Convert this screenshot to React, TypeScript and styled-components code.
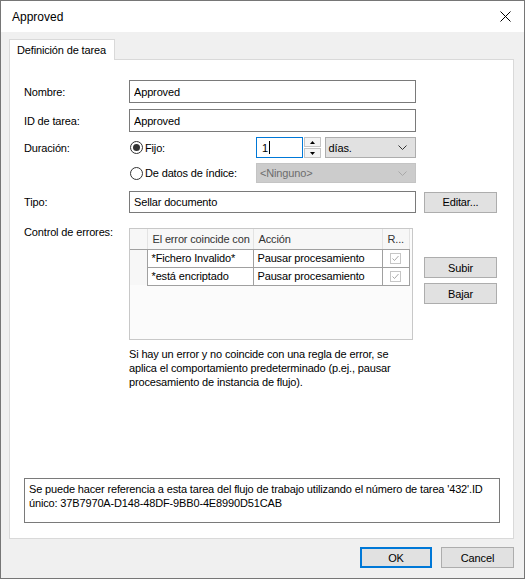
import React from 'react';
import styled, { createGlobalStyle } from 'styled-components';

const GlobalStyle = createGlobalStyle`
  html, body {
    margin: 0;
    padding: 0;
    background: #ffffff;
  }
  body {
    font-family: "Liberation Sans", Arial, sans-serif;
    font-size: 11px;
    letter-spacing: -0.15px;
    color: #000;
  }
  * {
    box-sizing: border-box;
  }
`

const Window = styled.div`
  width: 525px;
  height: 579px;
  border: 1px solid #767676;
  background: #f0f0f0;
  display: flex;
  flex-direction: column;
`

const TitleBar = styled.div`
  height: 31px;
  background: #ffffff;
  display: flex;
  align-items: center;
  justify-content: space-between;
  padding: 0 13px 0 11px;
  font-size: 12px;
  letter-spacing: 0;
`

const Body = styled.div`
  flex: 1;
  display: flex;
  flex-direction: column;
  padding: 7px 10px 10px 8px;
`

const TabStrip = styled.div`
  display: flex;
  height: 20px;
  position: relative;
  z-index: 1;
`

const Tab = styled.div`
  height: 21px;
  padding: 0 8px 0 7px;
  display: flex;
  align-items: center;
  background: #ffffff;
  border: 1px solid #d9d9d9;
  border-bottom: none;
`

const Panel = styled.div`
  flex: 1;
  display: flex;
  flex-direction: column;
  background: #ffffff;
  border: 1px solid #d9d9d9;
  padding: 20px 13px 15px 14px;
`

const FormRow = styled.div<{ $top?: number; $align?: string }>`
  display: flex;
  align-items: ${props => props.$align ?? 'center'};
  margin-top: ${props => props.$top ?? 0}px;
`

const Label = styled.div<{ $shift?: number }>`
  width: 105px;
  flex-shrink: 0;
  margin-top: ${props => props.$shift ?? 0}px;
`

const Field = styled.div`
  width: 287px;
  flex-shrink: 0;
  display: flex;
  align-items: center;
`

const TextBox = styled.input<{ $h?: number }>`
  width: 100%;
  height: ${props => props.$h ?? 23}px;
  border: 1px solid #7a7a7a;
  padding: 0 4px;
  font: inherit;
  letter-spacing: inherit;
  color: #000;
  background: #fff;
  outline: none;
`

const RadioLabel = styled.label`
  width: 127px;
  flex-shrink: 0;
  display: flex;
  align-items: center;
  gap: 2px;
  padding-left: 1px;
`

const RadioMark = styled.span<{ $on?: boolean }>`
  width: 13px;
  height: 13px;
  border-radius: 50%;
  border: 1px solid #333;
  background: #fff;
  display: flex;
  align-items: center;
  justify-content: center;
  &::after {
    content: '';
    width: 7px;
    height: 7px;
    border-radius: 50%;
    background: ${props => props.$on ? '#333' : 'transparent'};
  }
`

const SpinBox = styled.div`
  width: 47px;
  height: 21px;
  border: 1px solid #0078d7;
  display: flex;
  align-items: center;
  padding-left: 5px;
`

const Caret = styled.span`
  width: 1px;
  height: 13px;
  background: #000;
  margin-left: 1px;
`

const SpinButtons = styled.div`
  width: 17px;
  height: 21px;
  margin-left: 1px;
  display: flex;
  flex-direction: column;
  gap: 1px;
`

const SpinArrow = styled.div`
  flex: 1;
  border: 1px solid #c4c4c4;
  background: #f4f4f4;
  display: flex;
  align-items: center;
  justify-content: center;
`

const Combo = styled.div<{ $w: number; $disabled?: boolean }>`
  width: ${props => props.$w}px;
  height: ${props => props.$disabled ? 20 : 21}px;
  margin-left: ${props => props.$disabled ? 0 : 4}px;
  border: 1px solid ${props => props.$disabled ? '#c4c4c4' : '#adadad'};
  background: ${props => props.$disabled ? '#cccccc' : '#e1e1e1'};
  color: ${props => props.$disabled ? '#6d6d6d' : '#000'};
  display: flex;
  align-items: center;
  justify-content: space-between;
  padding: 0 8px 0 3px;
`

const Button = styled.div<{ $w?: number; $default?: boolean }>`
  width: ${props => props.$w ?? 73}px;
  height: 21px;
  flex-shrink: 0;
  border: ${props => props.$default ? '2px solid #0078d7' : '1px solid #adadad'};
  background: #e1e1e1;
  display: flex;
  align-items: center;
  justify-content: center;
`

const SideColumn = styled.div<{ $top?: number; $left?: number }>`
  margin-left: ${props => props.$left ?? 8}px;
  margin-top: ${props => props.$top ?? 0}px;
  display: flex;
  flex-direction: column;
  gap: 5px;
`

const Grid = styled.div`
  width: 284px;
  height: 112px;
  border: 1px solid #c8c8c8;
  background: #fbfbfb;
`

const GridTable = styled.table`
  border-collapse: collapse;
  table-layout: fixed;
`

const HeadCell = styled.th<{ $w: number }>`
  width: ${props => props.$w}px;
  height: 20px;
  padding: 0 0 0 5px;
  text-align: left;
  font-weight: normal;
  color: #333;
  background: #f7f7f7;
  border-right: 1px solid #e3e3e3;
  border-bottom: 1px solid #a0a0a0;
  white-space: nowrap;
  overflow: hidden;
`

const RowHead = styled.td`
  background: #f7f7f7;
  border-right: 1px solid #a0a0a0;
  padding: 0;
`

const Cell = styled.td<{ $center?: boolean }>`
  height: 18px;
  padding: ${props => props.$center ? '0' : '0 0 0 4px'};
  background: #fff;
  border-right: 1px solid #a0a0a0;
  border-bottom: 1px solid #a0a0a0;
  white-space: nowrap;
  text-align: ${props => props.$center ? 'center' : 'left'};
`

const Check = styled.span`
  display: inline-flex;
  width: 11px;
  height: 11px;
  border: 1px solid #c6c6c6;
  background: #fff;
  align-items: center;
  justify-content: center;
  vertical-align: middle;
`

const HelpText = styled.div`
  margin: 7px 0 0 105px;
  line-height: 14px;
`

const InfoBox = styled.div`
  margin-top: auto;
  height: 45px;
  border: 1px solid #7a7a7a;
  padding: 3px 4px;
  line-height: 14px;
  white-space: nowrap;
`

const Footer = styled.div`
  display: flex;
  justify-content: flex-end;
  gap: 9px;
  margin-top: 8px;
`

const Chevron: React.FC<{ color?: string }> = ({ color = '#333' }) => (
  <svg width="9" height="5" viewBox="0 0 9 5">
    <polyline points="0.5,0.5 4.5,4.5 8.5,0.5" fill="none" stroke={color} strokeWidth="1" />
  </svg>
)

const Arrow: React.FC<{ up?: boolean }> = ({ up }) => (
  <svg width="5" height="3" viewBox="0 0 5 3">
    <polygon points={up ? '0,3 5,3 2.5,0' : '0,0 5,0 2.5,3'} fill="#000" />
  </svg>
)

const CheckBox: React.FC = () => (
  <Check>
    <svg width="9" height="9" viewBox="0 0 9 9">
      <polyline points="1.5,4.5 3.5,6.5 7.5,2" fill="none" stroke="#a8a8a8" strokeWidth="1" />
    </svg>
  </Check>
)

const rules = [
  { match: '*Fichero Invalido*', action: 'Pausar procesamiento' },
  { match: '*está encriptado', action: 'Pausar procesamiento' },
]

const App: React.FC = () => {
  return (
    <>
      <GlobalStyle />
      <Window>
        <TitleBar>
          <span>Approved</span>
          <svg width="11" height="11" viewBox="0 0 11 11">
            <path d="M0.5 0.5 L10.5 10.5 M10.5 0.5 L0.5 10.5" stroke="#000" strokeWidth="1" />
          </svg>
        </TitleBar>
        <Body>
          <TabStrip>
            <Tab>Definición de tarea</Tab>
          </TabStrip>
          <Panel>
            <FormRow>
              <Label>Nombre:</Label>
              <Field><TextBox readOnly defaultValue="Approved" /></Field>
            </FormRow>
            <FormRow $top={6}>
              <Label>ID de tarea:</Label>
              <Field><TextBox readOnly defaultValue="Approved" /></Field>
            </FormRow>
            <FormRow $top={5}>
              <Label>Duración:</Label>
              <Field>
                <RadioLabel><RadioMark $on />Fijo:</RadioLabel>
                <SpinBox>1<Caret /></SpinBox>
                <SpinButtons>
                  <SpinArrow><Arrow up /></SpinArrow>
                  <SpinArrow><Arrow /></SpinArrow>
                </SpinButtons>
                <Combo $w={92}>días.<Chevron /></Combo>
              </Field>
            </FormRow>
            <FormRow $top={5}>
              <Label />
              <Field>
                <RadioLabel><RadioMark />De datos de índice:</RadioLabel>
                <Combo $w={160} $disabled>&lt;Ninguno&gt;<Chevron color="#a8a8a8" /></Combo>
              </Field>
            </FormRow>
            <FormRow $top={8}>
              <Label>Tipo:</Label>
              <Field><TextBox $h={22} readOnly defaultValue="Sellar documento" /></Field>
              <SideColumn><Button>Editar...</Button></SideColumn>
            </FormRow>
            <FormRow $top={15} $align="flex-start">
              <Label $shift={-2}>Control de errores:</Label>
              <Grid>
                <GridTable>
                  <thead>
                    <tr>
                      <HeadCell $w={17} />
                      <HeadCell $w={106}>El error coincide con</HeadCell>
                      <HeadCell $w={129}>Acción</HeadCell>
                      <HeadCell $w={27}>R...</HeadCell>
                    </tr>
                  </thead>
                  <tbody>
                    {rules.map(rule => (
                      <tr key={rule.match}>
                        <RowHead />
                        <Cell>{rule.match}</Cell>
                        <Cell>{rule.action}</Cell>
                        <Cell $center><CheckBox /></Cell>
                      </tr>
                    ))}
                  </tbody>
                </GridTable>
              </Grid>
              <SideColumn $top={29} $left={11}>
                <Button>Subir</Button>
                <Button>Bajar</Button>
              </SideColumn>
            </FormRow>
            <HelpText>
              Si hay un error y no coincide con una regla de error, se<br />
              aplica el comportamiento predeterminado (p.ej., pausar<br />
              procesamiento de instancia de flujo).
            </HelpText>
            <InfoBox>
              Se puede hacer referencia a esta tarea del flujo de trabajo utilizando el número de tarea '432'.ID<br />
              único: 37B7970A-D148-48DF-9BB0-4E8990D51CAB
            </InfoBox>
          </Panel>
          <Footer>
            <Button $w={72} $default>OK</Button>
            <Button>Cancel</Button>
          </Footer>
        </Body>
      </Window>
    </>
  );
};

export default App;
